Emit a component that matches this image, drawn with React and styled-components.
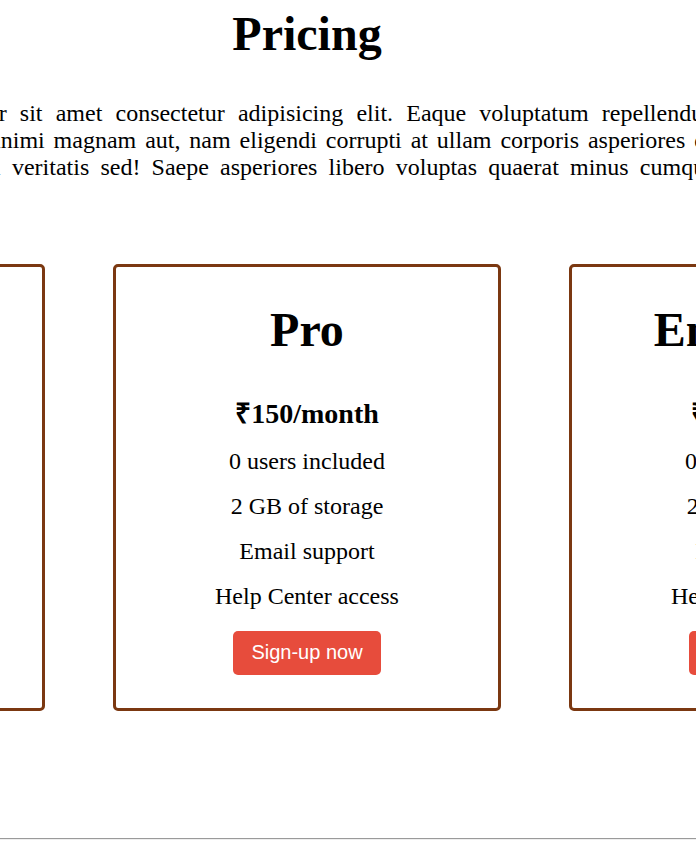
import styled, { createGlobalStyle } from "styled-components";

const plans = [
  {
    name: "Free",
    price: "₹0/month",
    features: ["10 users included", "2 GB of storage", "Email support", "Help Center access"],
  },
  {
    name: "Pro",
    price: "₹150/month",
    features: ["0 users included", "2 GB of storage", "Email support", "Help Center access"],
  },
  {
    name: "Enterprise",
    price: "₹250/month",
    features: ["0 users included", "2 GB of storage", "Email support", "Help Center access"],
  },
];

const App = () => {
  return (
    <Root>
      <GlobalStyle />
      <Page>
        <Title>Pricing</Title>
        <Intro>
          Lorem ipsum dolor sit amet consectetur adipisicing elit. Eaque voluptatum repellendus dolorum
          <br />
          reiciendis deleniti animi magnam aut, nam eligendi corrupti at ullam corporis asperiores quas labore
          <br />
          perferendis adipisci veritatis sed! Saepe asperiores libero voluptas quaerat minus cumque nesciunt
        </Intro>
        <Cards>
          {plans.map((plan) => (
            <Card key={plan.name}>
              <PlanName>{plan.name}</PlanName>
              <Price>{plan.price}</Price>
              <Features>
                {plan.features.map((f) => (
                  <Feature key={f}>{f}</Feature>
                ))}
              </Features>
              <SignUp>Sign-up now</SignUp>
            </Card>
          ))}
        </Cards>
      </Page>
      <Rule />
    </Root>
  );
};

const GlobalStyle = createGlobalStyle`
  html, body {
    margin: 0;
    padding: 0;
    overflow: hidden;
    background: #fff;
  }
  body {
    font-family: "Liberation Serif", "Times New Roman", serif;
    font-size: 24px;
    color: #000;
  }
`;

const Root = styled.div`
  width: 100%;
  overflow: hidden;
`;

// centred column, narrower than the wide text and card row so both spill off each side
const Page = styled.div`
  width: 614px;
  display: flex;
  flex-direction: column;
  align-items: center;
`;

const Title = styled.h1`
  margin: 6px 0 0;
  font-size: 48px;
  font-weight: bold;
  text-align: center;
`;

const Intro = styled.p`
  width: 1000px;
  flex-shrink: 0;
  margin: 38.5px 0 0;
  font-size: 24px;
  text-align: justify;
  text-align-last: justify;
`;

const Cards = styled.div`
  width: 1300px;
  flex-shrink: 0;
  margin-top: 83.5px;
  display: flex;
  justify-content: center;
  gap: 68px;
`;

const Card = styled.div`
  width: 388px;
  box-sizing: border-box;
  border: 3px solid #7b3811;
  border-radius: 5px;
  padding: 35px 20px 33px;
  display: flex;
  flex-direction: column;
  align-items: center;
`;

const PlanName = styled.h2`
  margin: 0 0 41px;
  font-size: 48px;
  font-weight: bold;
  line-height: 55.2px;
`;

const Price = styled.h3`
  margin: 0 0 17.5px;
  font-size: 28px;
  font-weight: bold;
  line-height: 32.2px;
`;

const Features = styled.ul`
  list-style: none;
  margin: 0;
  padding: 0;
  display: flex;
  flex-direction: column;
  align-items: center;
  gap: 17.4px;
`;

const Feature = styled.li`
  font-size: 24px;
  line-height: 27.6px;
`;

const SignUp = styled.button`
  margin-top: 20.3px;
  height: 44px;
  padding: 0 18px;
  border: none;
  border-radius: 5px;
  background: #e74c3c;
  color: #fff;
  font-family: "Liberation Sans", Arial, sans-serif;
  font-size: 20px;
  cursor: pointer;
`;

const Rule = styled.hr`
  margin: 127px 0 0;
  height: 0;
  border: none;
  border-top: 1px solid #9a9a9a;
  border-bottom: 1px solid #eeeeee;
`;

export default App;
